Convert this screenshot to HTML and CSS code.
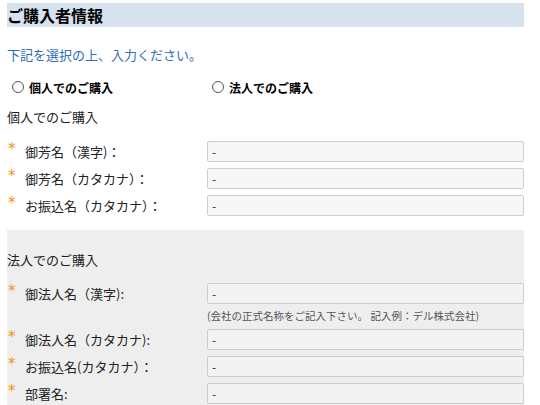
FILE: index.html
```html
<!DOCTYPE html>
<html lang="ja">
<head>
<meta charset="utf-8">
<title>ご購入者情報</title>
<link rel="stylesheet" href="styles.css">
</head>
<body>
<div class="page">
  <h2 class="title">ご購入者情報</h2>
  <p class="lead">下記を選択の上、入力ください。</p>
  <div class="choice">
    <label class="opt"><input type="radio" name="type"><span>個人でのご購入</span></label>
    <label class="opt"><input type="radio" name="type"><span>法人でのご購入</span></label>
  </div>

  <section class="block">
    <h3 class="sub">個人でのご購入</h3>
    <div class="row"><div class="lbl"><span class="req">*</span><span>御芳名（漢字)：</span></div><div class="field">-</div></div>
    <div class="row"><div class="lbl"><span class="req">*</span><span>御芳名（カタカナ）：</span></div><div class="field">-</div></div>
    <div class="row"><div class="lbl"><span class="req">*</span><span>お振込名（カタカナ）：</span></div><div class="field">-</div></div>
  </section>

  <section class="block corp">
    <h3 class="sub">法人でのご購入</h3>
    <div class="row"><div class="lbl"><span class="req">*</span><span>御法人名（漢字):</span></div><div class="field">-</div></div>
    <p class="note">(会社の正式名称をご記入下さい。 記入例：デル株式会社)</p>
    <div class="row"><div class="lbl"><span class="req">*</span><span>御法人名（カタカナ):</span></div><div class="field">-</div></div>
    <div class="row"><div class="lbl"><span class="req">*</span><span>お振込名(カタカナ）：</span></div><div class="field">-</div></div>
    <div class="row"><div class="lbl"><span class="req">*</span><span>部署名:</span></div><div class="field">-</div></div>
  </section>
</div>
</body>
</html>
```
FILE: styles.css
```css
html, body {
  margin: 0;
  padding: 0;
  background: #ffffff;
}
body {
  font-family: "Noto Sans CJK JP", "Noto Sans", sans-serif;
  color: #222;
  font-size: 13px;
}
.page {
  width: 517px;
  margin-left: 7px;
  padding-top: 3px;
}
.title {
  margin: 0;
  height: 24px;
  line-height: 24px;
  font-size: 16px;
  font-weight: bold;
  color: #000;
  background: #d6e2ee;
}
.lead {
  margin: 18px 0 0;
  line-height: 20px;
  color: #2f6db5;
  font-size: 13px;
}
.choice {
  display: flex;
  margin-top: 12px;
  height: 20px;
}
.opt {
  width: 200px;
  display: flex;
  align-items: center;
  font-size: 12px;
  font-weight: bold;
  color: #000;
}
.opt input {
  appearance: none;
  -webkit-appearance: none;
  width: 12px;
  height: 12px;
  margin: 0 5px 0 5px;
  border: 1px solid #555;
  border-radius: 50%;
  background: #fff;
  box-sizing: border-box;
}
.sub {
  margin: 10px 0 14px;
  line-height: 20px;
  font-size: 13px;
  font-weight: normal;
  color: #222;
}
.corp {
  margin-top: 14px;
  background: #eeeeee;
  padding-top: 20px;
  padding-bottom: 10px;
}
.corp .sub {
  margin: 0 0 13px;
}
.row {
  display: flex;
  align-items: center;
  height: 21px;
  margin-bottom: 6px;
}
.lbl {
  width: 200px;
  display: flex;
  align-items: center;
  line-height: 21px;
}
.req {
  width: 18px;
  padding-left: 1px;
  box-sizing: border-box;
  color: #ef9420;
  font-size: 15px;
  line-height: 15px;
  align-self: flex-start;
  margin-top: 1px;
  font-family: "DejaVu Sans", sans-serif;
}
.field {
  flex: 1;
  height: 21px;
  box-sizing: border-box;
  border: 1px solid #cdcdcd;
  border-radius: 2px;
  background: #f7f7f7;
  padding-left: 4px;
  line-height: 19px;
  font-size: 12px;
  color: #333;
}
.corp .field {
  background: #f3f3f3;
}
.note {
  margin: -3px 0 5px 200px;
  line-height: 17px;
  font-size: 10.5px;
  color: #555;
}
```
